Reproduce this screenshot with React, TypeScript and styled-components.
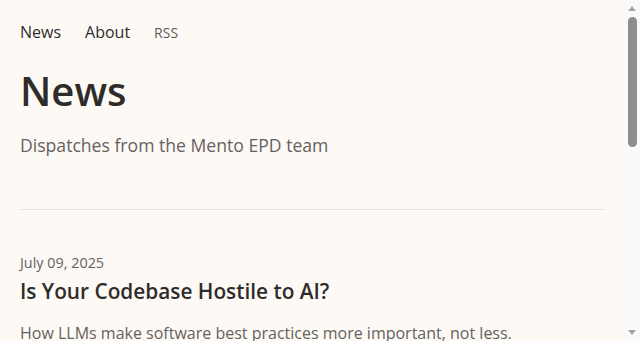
import React from "react";
import styled, { createGlobalStyle } from "styled-components";

const Global = createGlobalStyle`
  html, body { margin: 0; padding: 0; background: #fdfaf6; }
  body { font-family: "Open Sans", "Noto Sans", sans-serif; color: #2f2c2a; }
  * { box-sizing: border-box; }
`;

const Page = styled.div`
  padding: 0 35px 80px 20px;
`;

const Nav = styled.nav`
  display: flex;
  align-items: baseline;
  gap: 24px;
  padding-top: 21px;
  height: 54px;
`;

const NavLink = styled.a<{ $small?: boolean }>`
  font-size: ${(p) => (p.$small ? "14px" : "16px")};
  color: ${(p) => (p.$small ? "#5f5b57" : "#2f2c2a")};
  text-decoration: none;
  line-height: 22px;
`;

const Header = styled.header`
  padding-top: 10px;
  padding-bottom: 50px;
  border-bottom: 1px solid #e4e0da;
`;

const Title = styled.h1`
  margin: 0;
  font-size: 40px;
  font-weight: 600;
  line-height: 54px;
  color: #2f2c2a;
`;

const Subtitle = styled.p`
  margin: 13px 0 0;
  font-size: 17.6px;
  line-height: 28px;
  color: #66615d;
`;

const PostList = styled.div`
  display: flex;
  flex-direction: column;
  gap: 48px;
  padding-top: 42px;
`;

const Post = styled.article`
  display: flex;
  flex-direction: column;
`;

const PostDate = styled.time`
  font-size: 14.4px;
  line-height: 22px;
  color: #66615d;
`;

const PostTitle = styled.h2`
  margin: 2px 0 0;
  font-size: 20.8px;
  font-weight: 600;
  line-height: 30px;
  color: #2f2c2a;
`;

const PostDesc = styled.p`
  margin: 14px 0 0;
  font-size: 16px;
  line-height: 26px;
  color: #66615d;
`;

const ScrollTrack = styled.div`
  position: fixed;
  top: 0;
  right: 0;
  width: 15px;
  height: 100vh;
  background: #fafafa;
`;

const Arrow = styled.div<{ $down?: boolean }>`
  position: absolute;
  left: 3px;
  ${(p) => (p.$down ? "bottom: 6px;" : "top: 6px;")}
  width: 0;
  height: 0;
  border-left: 4.5px solid transparent;
  border-right: 4.5px solid transparent;
  ${(p) =>
    p.$down
      ? "border-top: 5px solid #a3a3a3;"
      : "border-bottom: 5px solid #a3a3a3;"}
`;

const Thumb = styled.div`
  position: absolute;
  left: 3px;
  top: 17px;
  width: 9px;
  height: 130px;
  border-radius: 5px;
  background: #8e8e8e;
`;

const posts = [
  {
    date: "July 09, 2025",
    title: "Is Your Codebase Hostile to AI?",
    desc: "How LLMs make software best practices more important, not less.",
  },
  {
    date: "June 18, 2025",
    title: "Shipping Faster with Smaller Pull Requests",
    desc: "Notes on how the team keeps changes small and reviews quick.",
  },
  {
    date: "May 27, 2025",
    title: "What We Learned Running Our First Hackathon",
    desc: "A look back at two days of building, breaking and demoing.",
  },
];

export default function App() {
  return (
    <>
      <Global />
      <Page>
        <Nav>
          <NavLink href="#">News</NavLink>
          <NavLink href="#">About</NavLink>
          <NavLink href="#" $small>
            RSS
          </NavLink>
        </Nav>
        <Header>
          <Title>News</Title>
          <Subtitle>Dispatches from the Mento EPD team</Subtitle>
        </Header>
        <PostList>
          {posts.map((p) => (
            <Post key={p.title}>
              <PostDate>{p.date}</PostDate>
              <PostTitle>{p.title}</PostTitle>
              <PostDesc>{p.desc}</PostDesc>
            </Post>
          ))}
        </PostList>
      </Page>
      <ScrollTrack aria-hidden>
        <Arrow />
        <Thumb />
        <Arrow $down />
      </ScrollTrack>
    </>
  );
}
